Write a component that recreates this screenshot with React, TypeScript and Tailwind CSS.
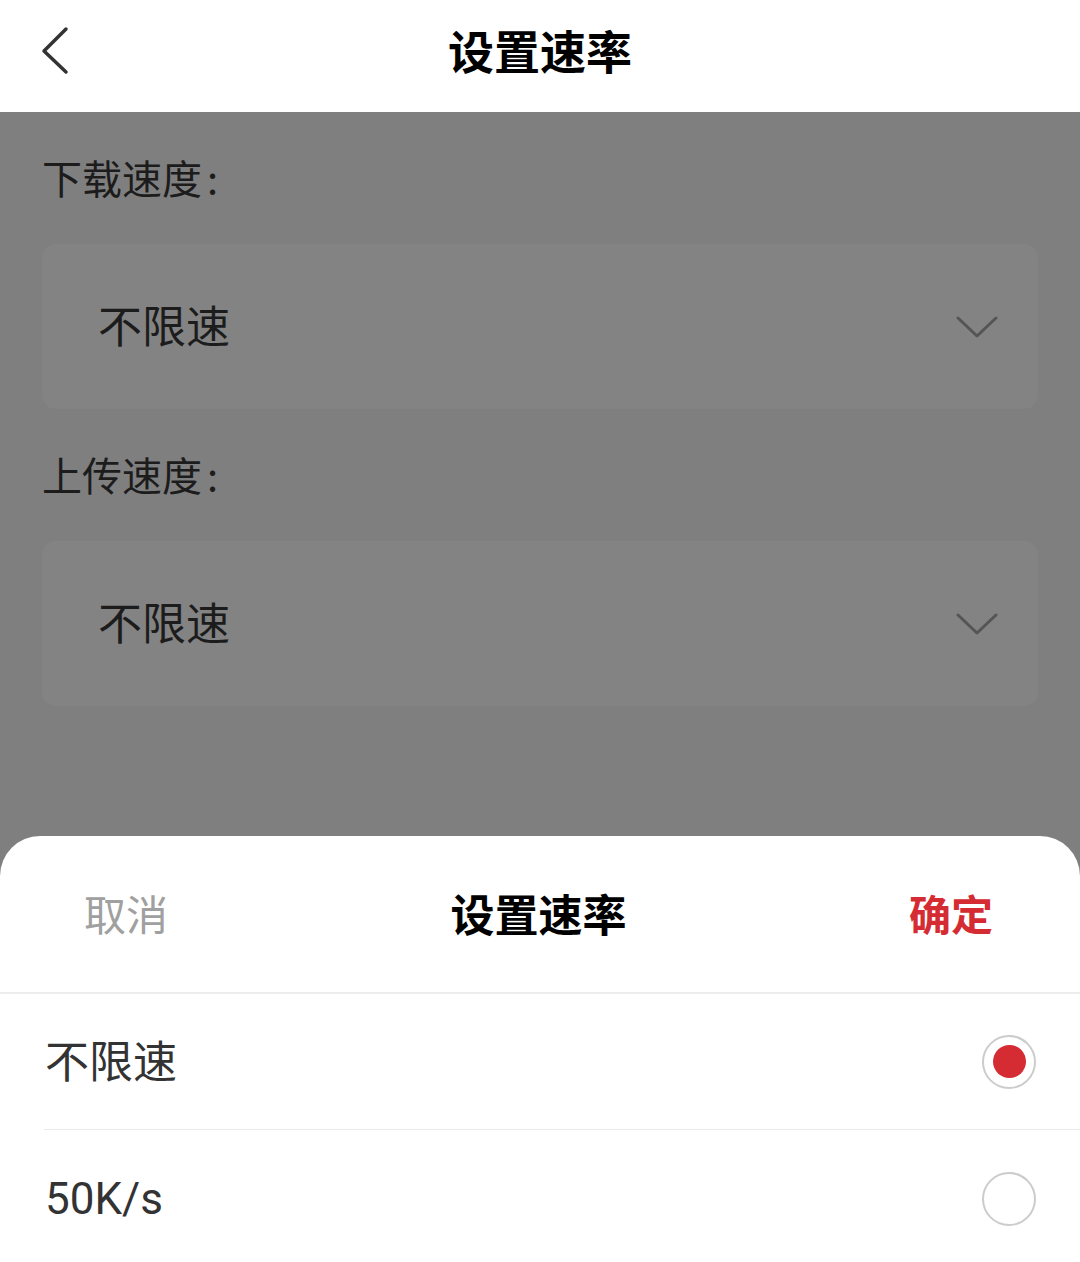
import React from "react";

const FONT = { fontFamily: '"Noto Sans CJK SC", "Noto Sans", sans-serif' };
const LATIN = { fontFamily: 'Roboto, "Noto Sans CJK SC", sans-serif' };

function Chevron() {
  return (
    <svg width="42" height="24" viewBox="0 0 42 24" fill="none">
      <polyline
        points="2,3 21,21 40,3"
        stroke="#555555"
        strokeWidth="3"
        strokeLinecap="round"
        strokeLinejoin="round"
      />
    </svg>
  );
}

function SelectBox({ value }: { value: string }) {
  return (
    <div className="mx-[42px] h-[165px] rounded-[14px] bg-[#838383] flex items-center justify-between pl-[56px] pr-[40px]">
      <span className="text-[44px] leading-none text-[#1c1c1c] mb-[6px]">{value}</span>
      <Chevron />
    </div>
  );
}

function Radio({ checked }: { checked: boolean }) {
  return (
    <div className="w-[54px] h-[54px] rounded-full border-[2.5px] border-[#cccccc] flex items-center justify-center">
      {checked && <div className="w-[33px] h-[33px] rounded-full bg-[#d52b33]" />}
    </div>
  );
}

function Label({ text }: { text: string }) {
  return (
    <div className="h-[56px] pl-[42px] flex items-center text-[40px] text-[#1c1c1c]">
      <span className="mb-[4px] leading-none">
        {text}
        <span className="ml-[5px]">:</span>
      </span>
    </div>
  );
}

export default function App() {
  return (
    <div className="relative w-[1080px] h-[1262px] overflow-hidden flex flex-col bg-[#7f7f7f]" style={FONT}>
      {/* top nav */}
      <div className="relative h-[112px] bg-white flex items-center justify-center shrink-0">
        <svg className="absolute left-[38px] top-[24px]" width="36" height="54" viewBox="0 0 36 54" fill="none">
          <polyline
            points="28,5 6,27 28,48"
            stroke="#333333"
            strokeWidth="3.5"
            strokeLinecap="round"
            strokeLinejoin="round"
          />
        </svg>
        <span className="text-[46px] font-bold text-black leading-none mb-[14px]">设置速率</span>
      </div>

      {/* dimmed content */}
      <div className="flex-1 flex flex-col pt-[39px]">
        <Label text="下载速度" />
        <div className="mt-[37px]">
          <SelectBox value="不限速" />
        </div>
        <div className="mt-[39px]">
          <Label text="上传速度" />
        </div>
        <div className="mt-[37px]">
          <SelectBox value="不限速" />
        </div>
      </div>

      {/* bottom sheet */}
      <div className="absolute left-0 right-0 top-[836px] bottom-0 bg-white rounded-t-[40px] overflow-hidden">
        <div className="h-[158px] border-b-2 border-[#ececec] flex items-center justify-between pl-[84px] pr-[87px]">
          <span className="text-[42px] text-[#a0a0a0] leading-none mb-[2px]">取消</span>
          <span className="text-[44px] font-bold text-black leading-none mb-[2px]">设置速率</span>
          <span className="text-[42px] font-bold text-[#d52b33] leading-none mb-[2px]">确定</span>
        </div>
        <div className="ml-[44px] h-[136px] border-b border-[#ebebeb] flex items-center justify-between pr-[44px]">
          <span className="text-[44px] text-[#333333] leading-none pl-[1px] mb-[6px]">不限速</span>
          <Radio checked />
        </div>
        <div className="ml-[44px] h-[138px] flex items-center justify-between pr-[44px]">
          <span className="text-[44px] text-[#333333] leading-none pl-[1px]" style={LATIN}>50K/s</span>
          <Radio checked={false} />
        </div>
      </div>
    </div>
  );
}
